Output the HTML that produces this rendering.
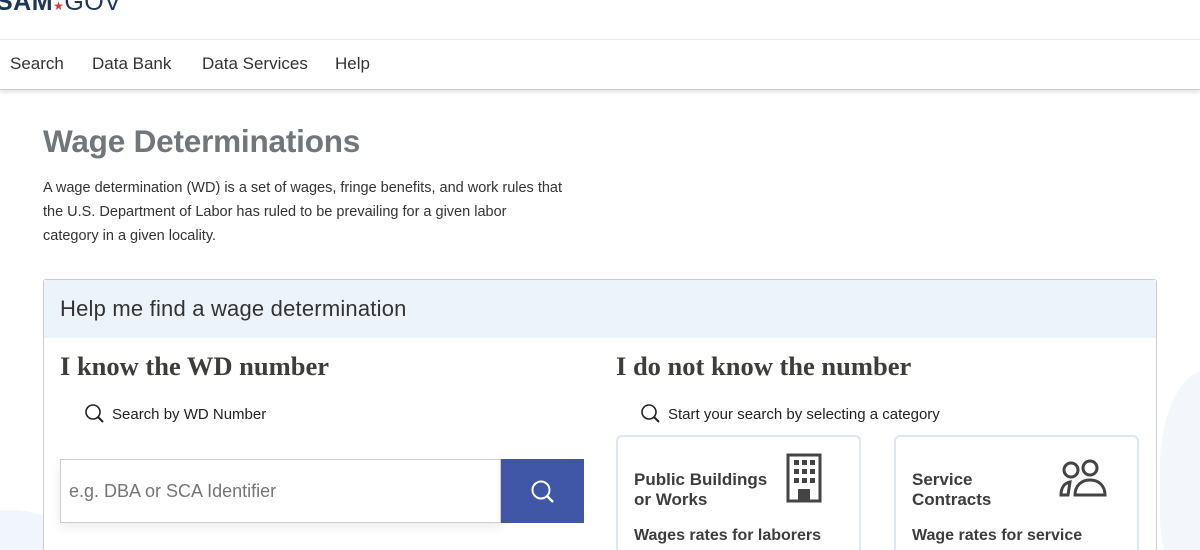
<!DOCTYPE html>
<html><head><meta charset="utf-8"><style>
*{box-sizing:border-box;margin:0;padding:0}
html,body{width:1200px;height:550px;overflow:hidden}
body{background:#fff;font-family:"Liberation Sans",sans-serif;color:#1b1b1b;position:relative}
.logo{position:absolute;left:-4px;top:-12px;font-size:25px;color:#1a3659;letter-spacing:0.5px}
.logo b{font-weight:900}
.logo .st{color:#d83933;font-size:12px}
.topline{position:absolute;top:39px;left:0;right:0;border-top:1px solid #eee}
.nav{position:absolute;top:40px;left:0;right:0;height:50px;border-bottom:1px solid #ccc;box-shadow:0 2px 4px rgba(0,0,0,.12)}
.nav span{position:absolute;top:14px;font-size:17px;color:#333}
h1{position:absolute;left:43px;top:123px;font-size:31.5px;font-weight:bold;color:#71767a;letter-spacing:-0.2px}
.intro{position:absolute;left:43px;top:176px;width:520px;font-size:14.5px;line-height:24px;color:#333}
.bg1{position:absolute;left:-70px;top:510px;width:160px;height:120px;border-radius:50%;background:#f0f6fb}
.bg2{position:absolute;left:1160px;top:370px;width:120px;height:240px;border-radius:40%;background:#f3f7fb}
.card{position:absolute;left:43px;top:279px;width:1114px;height:330px;border:1px solid #ccc;border-radius:3px;background:#fff}
.card .hd{height:58px;background:#edf3fa;padding:16px 16px;font-size:22px;color:#333;letter-spacing:0.2px}
h2{position:absolute;font-family:"Liberation Serif",serif;font-weight:bold;font-size:26.5px;color:#3d3d3a}
.lbl{position:absolute;font-size:15px;color:#222}
.lbl svg{position:absolute;left:-28px;top:-3px}
.inp{position:absolute;left:60px;top:459px;width:441px;height:64px;border:1px solid #ccc;font-size:18px;color:#757575;padding:21px 8px;box-shadow:0 4px 10px rgba(0,0,0,.08)}
.btn{position:absolute;left:501px;top:459px;width:83px;height:64px;background:#3f57a6}
.tile{position:absolute;top:435px;width:245px;height:160px;border:2px solid #dbe8f6;border-radius:6px;background:#fff}
.tile .t{position:absolute;left:16px;top:33px;font-size:17px;font-weight:bold;color:#3d3d3d;line-height:20px}
.tile .d{position:absolute;left:16px;top:90px;font-size:16px;font-weight:bold;color:#3d3d3d}
</style></head><body>
<div class="logo"><b>SAM</b><span class="st">★</span>GOV</div>
<div class="topline"></div>
<div class="nav"><span style="left:10px">Search</span><span style="left:92px">Data Bank</span><span style="left:202px">Data Services</span><span style="left:335px">Help</span></div>
<div class="bg1"></div><div class="bg2"></div>
<h1>Wage Determinations</h1>
<div class="intro">A wage determination (WD) is a set of wages, fringe benefits, and work rules that the U.S. Department of Labor has ruled to be prevailing for a given labor category in a given locality.</div>
<div class="card"><div class="hd">Help me find a wage determination</div></div>
<h2 style="left:60px;top:351px">I know the WD number</h2>
<h2 style="left:616px;top:351px">I do not know the number</h2>
<div class="lbl" style="left:112px;top:406px"><svg width="22" height="22" viewBox="0 0 22 22"><circle cx="9" cy="9" r="7" fill="none" stroke="#222" stroke-width="1.6"/><path d="M14 14l5 5" stroke="#222" stroke-width="2"/></svg>Search by WD Number</div>
<div class="lbl" style="left:668px;top:406px"><svg width="22" height="22" viewBox="0 0 22 22"><circle cx="9" cy="9" r="7" fill="none" stroke="#222" stroke-width="1.6"/><path d="M14 14l5 5" stroke="#222" stroke-width="2"/></svg>Start your search by selecting a category</div>
<div class="inp">e.g. DBA or SCA Identifier</div>
<div class="btn"><svg style="position:absolute;left:29px;top:20px" width="26" height="26" viewBox="0 0 26 26"><circle cx="11" cy="11" r="8.5" fill="none" stroke="#fff" stroke-width="2"/><path d="M17 17l6 6" stroke="#fff" stroke-width="2.4"/></svg></div>
<div class="tile" style="left:616px"><div class="t">Public Buildings<br>or Works</div><div class="d">Wages rates for laborers</div>
<svg style="position:absolute;left:168px;top:16px" width="38" height="50" viewBox="0 0 38 50"><rect x="2" y="2" width="32" height="46" fill="none" stroke="#444" stroke-width="3"/><g fill="#444"><rect x="8" y="7" width="5" height="5"/><rect x="16" y="7" width="5" height="5"/><rect x="24" y="7" width="5" height="5"/><rect x="8" y="16" width="5" height="5"/><rect x="16" y="16" width="5" height="5"/><rect x="24" y="16" width="5" height="5"/><rect x="8" y="25" width="5" height="5"/><rect x="16" y="25" width="5" height="5"/><rect x="24" y="25" width="5" height="5"/><rect x="12" y="36" width="12" height="12"/></g></svg></div>
<div class="tile" style="left:894px"><div class="t">Service<br>Contracts</div><div class="d">Wage rates for service</div>
<svg style="position:absolute;left:162px;top:22px" width="50" height="40" viewBox="0 0 50 40"><g fill="none" stroke="#444" stroke-width="3"><circle cx="13" cy="11" r="7"/><circle cx="32" cy="9" r="7"/><path d="M3 36c0-8 4-12 9-13l-2 13z"/><path d="M17 36c0-9 6-15 15-15s15 6 15 15z"/></g></svg></div>
</body></html>
